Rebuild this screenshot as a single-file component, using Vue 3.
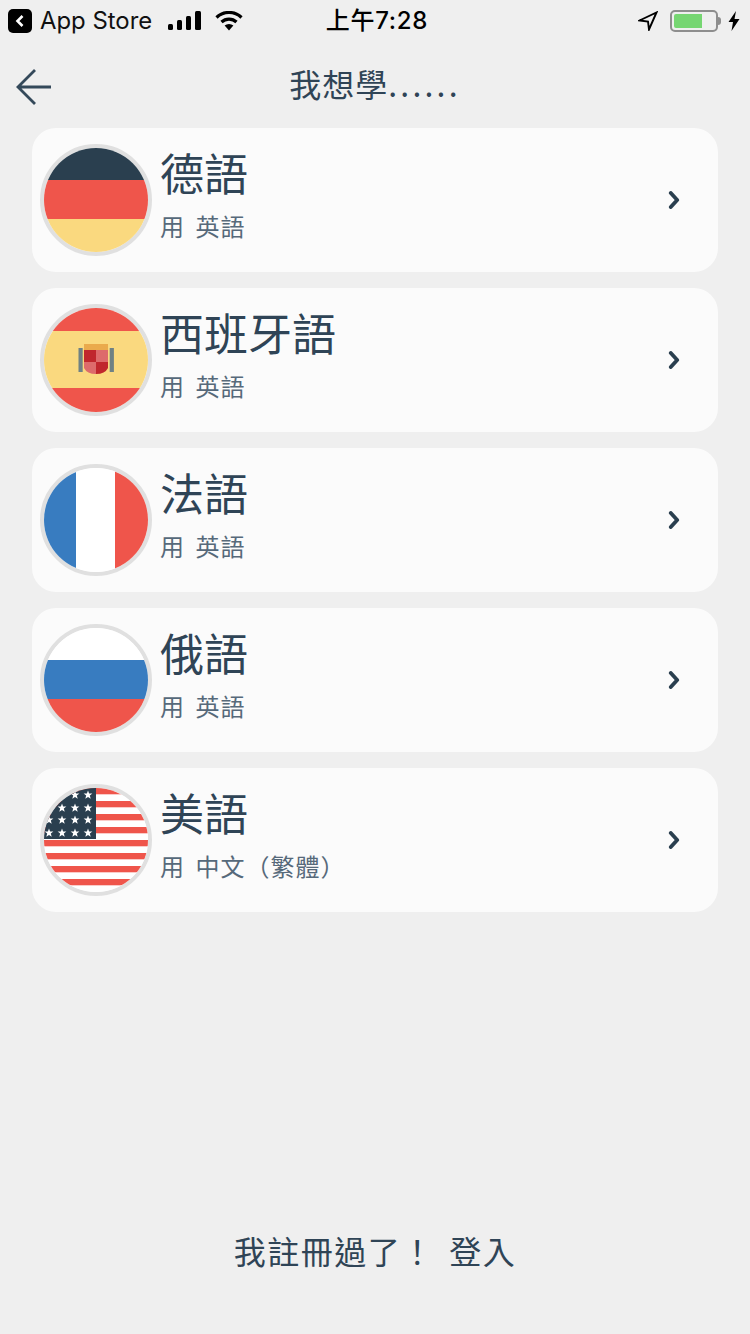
<script setup>
const languages = [
  { id: 'de', name: '德語', sub: '用 英語' },
  { id: 'es', name: '西班牙語', sub: '用 英語' },
  { id: 'fr', name: '法語', sub: '用 英語' },
  { id: 'ru', name: '俄語', sub: '用 英語' },
  { id: 'us', name: '美語', sub: '用 中文（繁體）' }
]

const red = '#ef554b'
const yellow = '#fad97f'
const navy = '#2a3f4f'
const blue = '#387cc0'

// horizontal bands of the simple flags: [y, height, colour]
const bands = {
  de: [[0, 32, navy], [32, 39, red], [71, 33, yellow]],
  es: [[0, 23, red], [23, 57, yellow], [80, 24, red]],
  ru: [[0, 32, '#fff'], [32, 39, blue], [71, 33, red]]
}

const usStripes = [0, 13, 26, 39, 52, 65, 78, 91]
const usStars = [
  [31, 7], [44, 7],
  [18, 20], [31, 20], [44, 20],
  [5, 32], [18, 32], [31, 32], [44, 32],
  [5, 45], [18, 45], [31, 45], [44, 45]
]

function starPoints(cx, cy) {
  const pts = []
  for (let i = 0; i < 10; i++) {
    const r = i % 2 ? 1.9 : 4.6
    const a = (Math.PI / 5) * i - Math.PI / 2
    pts.push((cx + r * Math.cos(a)).toFixed(2) + ',' + (cy + r * Math.sin(a)).toFixed(2))
  }
  return pts.join(' ')
}
</script>

<template>
  <div class="page">
    <div class="status">
      <div class="status-left">
        <span class="back-app">
          <svg width="12" height="14" viewBox="0 0 12 14"><path d="M8.5 2 L3.5 7 L8.5 12" fill="none" stroke="#fff" stroke-width="2.6" /></svg>
        </span>
        <span class="app-name">App Store</span>
        <svg class="signal" width="33" height="20" viewBox="0 0 33 20">
          <rect x="0" y="13" width="5" height="6" rx="1.5" />
          <rect x="9" y="9" width="5" height="10" rx="1.5" />
          <rect x="18" y="5" width="5" height="14" rx="1.5" />
          <rect x="27" y="0" width="6" height="19" rx="1.5" />
        </svg>
        <svg class="wifi" width="28" height="20" viewBox="0 0 28 20">
          <path d="M1.5 6.5 A18 18 0 0 1 26.5 6.5" fill="none" stroke="#000" stroke-width="3.2" />
          <path d="M6.5 11 A11 11 0 0 1 21.5 11" fill="none" stroke="#000" stroke-width="3.2" />
          <path d="M14 19.5 L9.6 14.6 A6.5 6.5 0 0 1 18.4 14.6 Z" />
        </svg>
      </div>
      <div class="time">上午7:28</div>
      <div class="status-right">
        <svg class="loc" width="20" height="20" viewBox="0 0 20 20">
          <path d="M1.5 9.5 L18.5 1.5 L11 18.5 L10 10.5 Z" fill="none" stroke="#000" stroke-width="1.9" stroke-linejoin="miter" />
        </svg>
        <div class="battery">
          <div class="battery-body"><div class="battery-level"></div></div>
          <div class="battery-tip"></div>
        </div>
        <svg class="bolt" width="12" height="20" viewBox="0 0 12 20">
          <path d="M8 0 L0.5 11 L5 11 L3.5 20 L11.5 8 L6.5 8 Z" />
        </svg>
      </div>
    </div>

    <div class="nav">
      <svg class="nav-back" width="36" height="36" viewBox="0 0 36 36">
        <path d="M35 18 H2 M19 1 L2 18 L19 35" fill="none" stroke="#34495a" stroke-width="2.8" />
      </svg>
      <div class="nav-title">我想學<span class="dots">......</span></div>
    </div>

    <div class="list">
      <div v-for="lang in languages" :key="lang.id" class="card">
        <div class="flag">
          <svg width="104" height="104" viewBox="0 0 104 104">
            <template v-if="bands[lang.id]">
              <rect v-for="b in bands[lang.id]" :key="b[0]" x="0" :y="b[0]" width="104" :height="b[1]" :fill="b[2]" />
            </template>
            <template v-if="lang.id === 'es'">
              <rect x="34.5" y="40" width="4.2" height="24" fill="#6f8184" />
              <rect x="65.7" y="40" width="4.2" height="24" fill="#6f8184" />
              <rect x="40" y="36" width="24" height="6" fill="#eaaa4c" />
              <path d="M40 42 H52 V54 H40 Z" fill="#c0272d" />
              <path d="M52 42 H64 V54 H52 Z" fill="#dd6b6b" />
              <path d="M40 54 H52 V66 Q43 66 40 60 Z" fill="#dd6b6b" />
              <path d="M52 54 H64 V60 Q61 66 52 66 Z" fill="#c0272d" />
            </template>
            <template v-if="lang.id === 'fr'">
              <rect x="0" y="0" width="32" height="104" :fill="blue" />
              <rect x="32" y="0" width="39" height="104" fill="#fff" />
              <rect x="71" y="0" width="33" height="104" :fill="red" />
            </template>
            <template v-if="lang.id === 'us'">
              <rect x="0" y="0" width="104" height="104" fill="#fff" />
              <rect v-for="y in usStripes" :key="y" x="0" :y="y" width="104" height="6.3" :fill="red" />
              <rect x="0" y="0" width="52" height="51" :fill="navy" />
              <polygon v-for="s in usStars" :key="s.join()" :points="starPoints(s[0], s[1])" fill="#fff" />
            </template>
          </svg>
        </div>
        <div class="text">
          <div class="name">{{ lang.name }}</div>
          <div class="sub">{{ lang.sub }}</div>
        </div>
        <svg class="chevron" width="12" height="18" viewBox="0 0 12 18">
          <path d="M2.8 2 L9.2 9 L2.8 16" fill="none" stroke="#2a3f4f" stroke-width="3.8" stroke-linecap="round" stroke-linejoin="round" />
        </svg>
      </div>
    </div>

    <div class="footer">我註冊過了！ 登入</div>
  </div>
</template>

<style scoped>
.page {
  width: 750px;
  height: 1334px;
  background: #efefef;
  display: flex;
  flex-direction: column;
  font-family: "Noto Sans CJK TC", "Noto Sans", sans-serif;
  color: #2f4456;
  overflow: hidden;
}

.status {
  height: 40px;
  display: grid;
  grid-template-columns: 1fr auto 1fr;
  align-items: center;
  color: #000;
  padding: 2px 10px 0 8px;
  box-sizing: border-box;
}
.status-left {
  display: flex;
  align-items: center;
}
.back-app {
  width: 24px;
  height: 24px;
  background: #000;
  border-radius: 5px;
  display: flex;
  align-items: center;
  justify-content: center;
}
.app-name {
  margin-left: 8px;
  font-family: Inter, sans-serif;
  font-size: 23.9px;
  line-height: 28px;
  color: #111;
}
.signal {
  margin-left: 16px;
}
.wifi {
  margin-left: 14px;
}
.time {
  margin-left: 6px;
  font-size: 24px;
  font-weight: 500;
  line-height: 28px;
  font-family: Inter, "Noto Sans CJK TC", sans-serif;
  letter-spacing: 0.7px;
}
.status-right {
  display: flex;
  align-items: center;
  justify-content: flex-end;
}
.battery {
  display: flex;
  align-items: center;
  margin-left: 12px;
}
.battery-body {
  width: 48px;
  height: 22px;
  border: 2px solid #8e8e8e;
  border-radius: 5px;
  box-sizing: border-box;
  padding: 2px;
}
.battery-level {
  width: 28px;
  height: 14px;
  background: #76d672;
  border-radius: 2px 0 0 2px;
}
.battery-tip {
  width: 3px;
  height: 8px;
  background: #8e8e8e;
  border-radius: 0 3px 3px 0;
}
.bolt {
  margin-left: 7px;
}

.nav {
  height: 88px;
  position: relative;
  display: flex;
  align-items: center;
  justify-content: center;
}
.nav-back {
  position: absolute;
  left: 16px;
  top: 29px;
}
.nav-title {
  font-size: 32px;
  line-height: 44px;
  margin-top: -2px;
  letter-spacing: 1px;
}
.dots {
  letter-spacing: 3.2px;
}

.list {
  display: flex;
  flex-direction: column;
  gap: 16px;
  padding: 0 32px;
}
.card {
  height: 144px;
  background: #fbfbfb;
  border-radius: 24px;
  display: flex;
  align-items: center;
  padding: 0 38px 0 8px;
}
.flag {
  width: 112px;
  height: 112px;
  border: 4px solid #e0e0e0;
  border-radius: 50%;
  box-sizing: border-box;
  overflow: hidden;
  flex: none;
}
.flag svg {
  display: block;
}
.text {
  margin-left: 8px;
  padding-bottom: 15px;
  flex: 1;
}
.name {
  font-size: 44px;
  line-height: 58px;
}
.sub {
  margin-top: 9px;
  font-size: 24px;
  line-height: 32px;
  color: #56697a;
  letter-spacing: 1px;
  word-spacing: 4px;
}

.footer {
  margin-top: auto;
  margin-bottom: 61px;
  text-align: center;
  font-size: 32px;
  line-height: 46px;
  letter-spacing: 1.5px;
  word-spacing: 6px;
}
</style>
